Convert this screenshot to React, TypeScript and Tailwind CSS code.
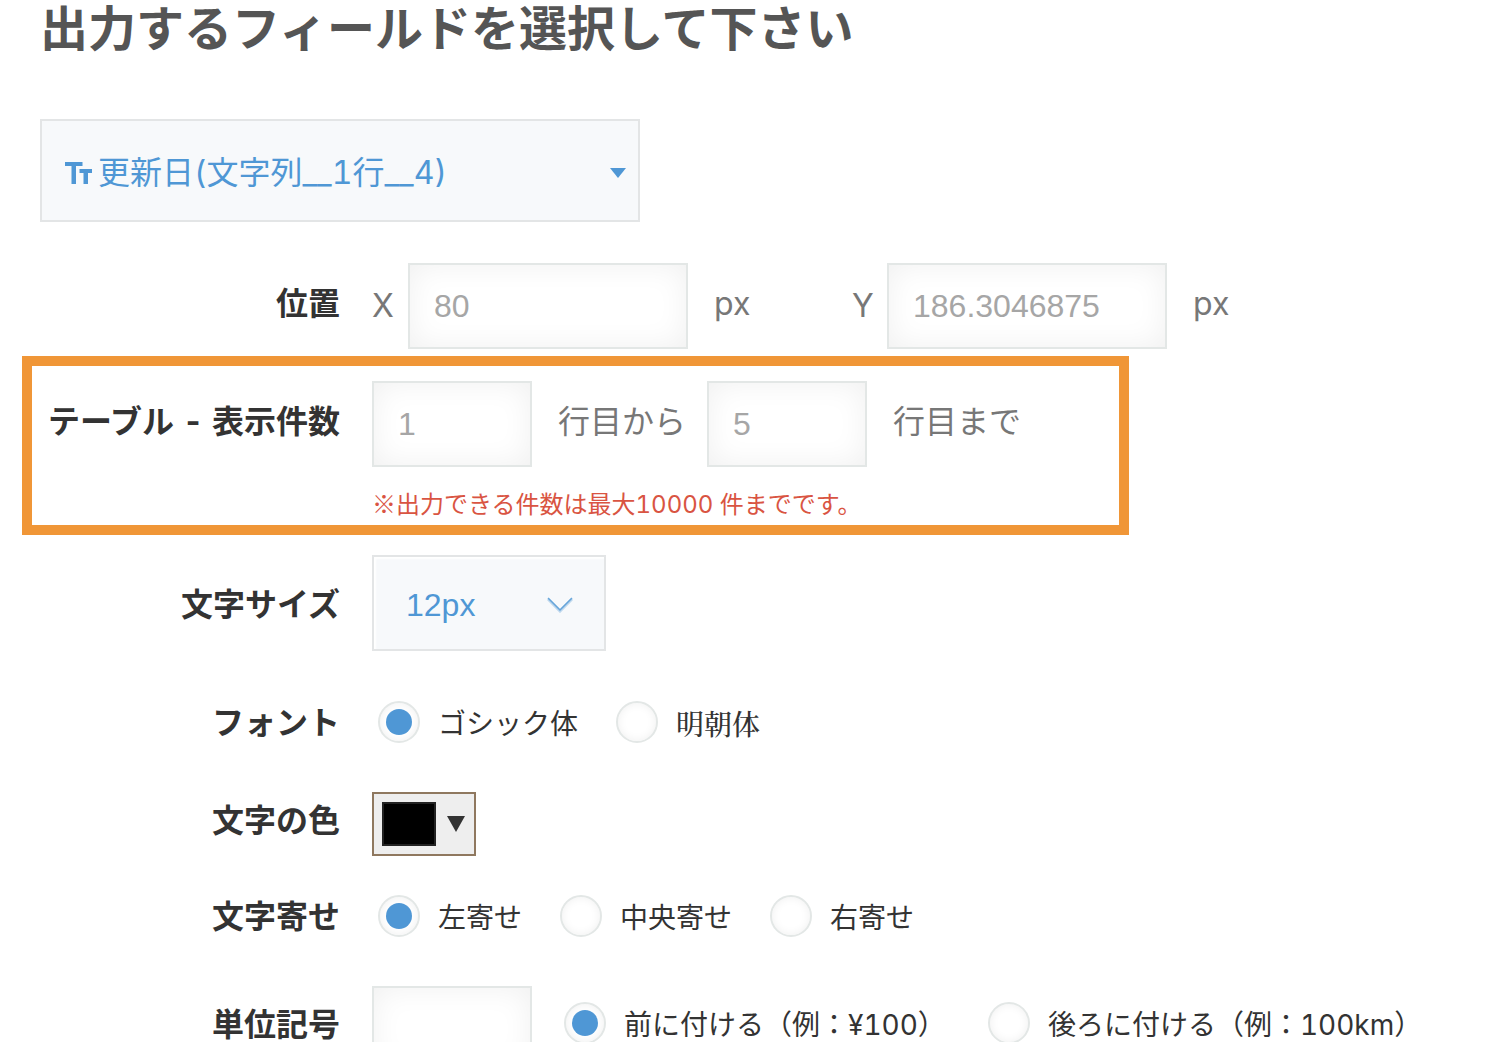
import { useState, type ReactNode } from "react";

const inputClass =
  "h-[86px] rounded-none border-2 border-[#e3e7e6] bg-white px-6 font-['Liberation_Sans','Noto_Sans_CJK_JP',sans-serif] text-[32px] leading-9 text-[#a6a6a6] shadow-[inset_0_0_30px_#f0f0f0] outline-none";

const labelClass = "w-[300px] shrink-0 text-right text-[32px] leading-10 font-bold text-[#333]";

function NumberBox({ id, label, initial, width }: { id: string; label: string; initial: string; width: string }) {
  const [value, setValue] = useState(initial);
  return (
    <input
      id={id}
      type="text"
      aria-label={label}
      value={value}
      onChange={(e) => setValue(e.target.value)}
      className={`${inputClass} ${width}`}
    />
  );
}

function Radio({ name, checked, children }: { name: string; checked?: boolean; children: ReactNode }) {
  return (
    <label className="flex shrink-0 items-center gap-[18px] text-[28px] leading-9 whitespace-nowrap text-[#333]">
      <input
        type="radio"
        name={name}
        defaultChecked={checked}
        className="grid size-[42px] shrink-0 appearance-none place-items-center rounded-full border-2 border-[#e3e7e6] bg-white shadow-[inset_0_0_10px_#f0f0f0] before:size-[26px] before:rounded-full checked:before:bg-[#4f97d5]"
      />
      <span className="pt-1">{children}</span>
    </label>
  );
}

function TextIcon() {
  return (
    <svg width="27" height="22" viewBox="0 0 27 22" fill="currentColor" aria-hidden="true">
      <path d="M0 0H17.500V4H11V22H6.500V4H0Z" />
      <path d="M14.500 7H27V11H23V22H18.500V11H14.500Z" />
    </svg>
  );
}

export default function App() {
  return (
    <main className="h-screen overflow-hidden bg-white px-10 font-['Inter','Noto_Sans_CJK_JP',sans-serif] text-[32px] text-[#777] tabular-nums">
      <h1 className="text-[48px] leading-[58px] font-bold whitespace-nowrap text-[#555]">
        出力するフィールドを選択して下さい
      </h1>

      <form onSubmit={(e) => e.preventDefault()}>
        <button
          type="button"
          aria-haspopup="listbox"
          className="mt-[61px] flex h-[103px] w-[600px] items-center border-2 border-[#e3e5e6] bg-[#f7f9fb] pt-1 pr-3 pl-[23px] text-[#4f97d5]"
        >
          <TextIcon />
          <span className="ml-[6px] leading-10">更新日(文字列__1行__4)</span>
          <svg className="ml-auto" width="16" height="10" viewBox="0 0 16 10" fill="currentColor" aria-hidden="true">
            <path d="M0 0H16L8 10Z" />
          </svg>
        </button>

        <div className="mt-[41px] flex items-center">
          <span className={`${labelClass} pb-1`}>位置</span>
          <label htmlFor="pos-x" className="ml-8 w-9">X</label>
          <NumberBox id="pos-x" label="X" initial="80" width="w-[280px]" />
          <span className="ml-[26px] w-[138px] pb-1">px</span>
          <label htmlFor="pos-y" className="w-[35px]">Y</label>
          <NumberBox id="pos-y" label="Y" initial="186.3046875" width="w-[280px]" />
          <span className="ml-[26px] pb-1">px</span>
        </div>

        <section className="mt-[7px] -ml-[18px] w-full max-w-[1107px] border-[10px] border-[#f09637] pt-[15px] pb-1 pl-2">
          <div className="flex items-center">
            <span className={`${labelClass} pb-1`}>テーブル - 表示件数</span>
            <div className="ml-8 flex items-center">
              <NumberBox id="row-from" label="開始行" initial="1" width="w-[160px]" />
              <label htmlFor="row-from" className="ml-[26px] w-[149px] pb-1">行目から</label>
              <NumberBox id="row-to" label="終了行" initial="5" width="w-[160px]" />
              <label htmlFor="row-to" className="ml-[26px] pb-1">行目まで</label>
            </div>
          </div>
          <p className="mt-[18px] ml-[332px] h-9 text-[24px] leading-9 text-[#d95442]">
            <span className="font-['Noto_Sans_CJK_JP',sans-serif]">※</span>出力できる件数は最大10000 件までです。
          </p>
        </section>

        <div className="mt-5 flex items-center">
          <label htmlFor="font-size" className={`${labelClass} pt-1`}>文字サイズ</label>
          <div className="relative ml-8">
            <select
              id="font-size"
              defaultValue="12"
              className="h-24 w-[234px] appearance-none rounded-none border-2 border-[#e3e5e6] bg-[#f7f9fb] pt-1 pl-8 font-['Liberation_Sans','Noto_Sans_CJK_JP',sans-serif] text-[32px] text-[#4f97d5] shadow-[inset_2px_2px_2px_#fff] outline-none"
            >
              <option value="10">10px</option>
              <option value="12">12px</option>
              <option value="14">14px</option>
            </select>
            <svg
              className="pointer-events-none absolute top-[42px] right-[33px]"
              width="26"
              height="16"
              viewBox="0 0 26 16"
              fill="none"
              stroke="#4f97d5"
              aria-hidden="true"
            >
              <path d="M1 2L13 14L25 2" strokeWidth="3" strokeOpacity="0.35" />
              <path d="M1 1L13 13L25 1" strokeWidth="1.500" strokeOpacity="0.8" />
            </svg>
          </div>
        </div>

        <div role="radiogroup" aria-label="フォント" className="mt-[50px] flex h-[42px] items-center">
          <span className={`${labelClass} pt-[2px]`}>フォント</span>
          <div className="ml-[38px] flex gap-[38px]">
            <Radio name="font" checked>ゴシック体</Radio>
            <Radio name="font">
              <span className="font-['Noto_Serif_CJK_JP','Noto_Serif_JP','Noto_Sans_CJK_JP',serif] font-medium">明朝体</span>
            </Radio>
          </div>
        </div>

        <div className="mt-[49px] flex items-center">
          <span className={`${labelClass} pb-[6px]`}>文字の色</span>
          <button
            type="button"
            aria-label="文字の色"
            className="ml-8 flex h-16 w-[104px] items-center border-2 border-[#8f785f] bg-[#eee] pl-2 text-[#333]"
          >
            <span className="h-11 w-[54px] border-2 border-[#222] bg-black" />
            <svg className="ml-[11px]" width="18" height="16" viewBox="0 0 18 16" fill="currentColor" aria-hidden="true">
              <path d="M0 0H18L9 16Z" />
            </svg>
          </button>
        </div>

        <div role="radiogroup" aria-label="文字寄せ" className="mt-[39px] flex h-[42px] items-center">
          <span className={`${labelClass} pt-[2px]`}>文字寄せ</span>
          <div className="ml-[38px] flex gap-[38px]">
            <Radio name="align" checked>左寄せ</Radio>
            <Radio name="align">中央寄せ</Radio>
            <Radio name="align">右寄せ</Radio>
          </div>
        </div>

        <div className="mt-[49px] flex items-center">
          <label htmlFor="unit" className={`${labelClass} pb-2`}>単位記号</label>
          <div className="ml-8 flex items-center">
            <NumberBox id="unit" label="単位記号" initial="" width="w-[160px]" />
            <div role="radiogroup" aria-label="単位記号の位置" className="ml-8 flex gap-[42px] pb-3">
              <Radio name="unit-position" checked>前に付ける（例：¥100）</Radio>
              <Radio name="unit-position">後ろに付ける（例：100km）</Radio>
            </div>
          </div>
        </div>
      </form>
    </main>
  );
}
